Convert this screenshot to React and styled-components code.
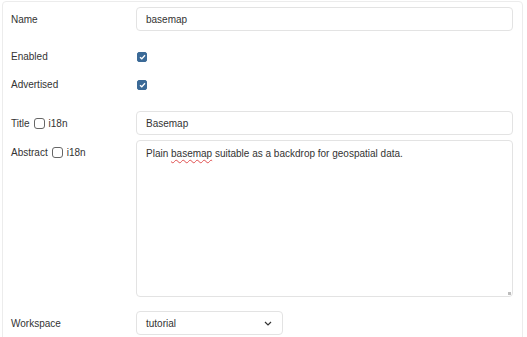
import React from "react";
import styled, { createGlobalStyle } from "styled-components";

const GlobalStyle = createGlobalStyle`
  html, body {
    margin: 0;
    padding: 0;
    background: #ffffff;
  }
  body {
    font-family: "Liberation Sans", Arial, sans-serif;
    font-size: 10px;
    color: #333333;
  }
`;

// PANEL

const Panel = styled.div`
  box-sizing: border-box;
  margin: 1px 4px 0 2px;
  min-height: 360px;
  border: 1px solid #ececec;
  border-radius: 4px;
  padding: 3px 9px 0 8px;
`;

const Row = styled.div`
  display: grid;
  grid-template-columns: 125px 1fr;
  align-items: ${props => (props.top ? "start" : "center")};
  margin-top: ${props => props.gap || 0}px;
  min-height: ${props => props.h || 20}px;
`;

const Label = styled.label`
  display: flex;
  align-items: center;
  gap: 4px;
  font-size: 10px;
  color: #333;
  padding-top: ${props => props.pt || 0}px;
`;

const Field = styled.div`
  box-sizing: border-box;
  height: 24px;
  display: flex;
  align-items: center;
  padding: 0 9px;
  border: 1px solid #e3e3e3;
  border-radius: 4px;
  background: #fff;
  font-size: 10px;
  color: #333;
`;

const TextArea = styled.div`
  position: relative;
  box-sizing: border-box;
  height: 157px;
  padding: 6px 9px;
  border: 1px solid #e3e3e3;
  border-radius: 4px;
  font-size: 10px;
  line-height: 13px;
  color: #333;

  &::after {
    content: "";
    position: absolute;
    right: 1px;
    bottom: 1px;
    width: 3px;
    height: 3px;
    background: #bdbdbd;
  }
`;

const Misspelled = styled.span`
  text-decoration: underline wavy #e05050;
  text-decoration-thickness: 1px;
  text-underline-offset: 2px;
`;

const Select = styled(Field)`
  width: 147px;
  justify-content: space-between;
  padding-right: 10px;
`;

const Check = styled.span`
  display: inline-flex;
  align-items: center;
  justify-content: center;
  box-sizing: border-box;
  width: ${props => props.size || 10}px;
  height: ${props => props.size || 10}px;
  border-radius: ${props => (props.checked ? 2 : 3)}px;
  margin-left: ${props => props.ml || 0}px;
  background: ${props => (props.checked ? "#3b6a97" : "#fff")};
  border: 1px solid ${props => (props.checked ? "#3b6a97" : "#666")};
`;

const CheckMark = () => (
  <svg width="7" height="6" viewBox="0 0 7 6">
    <path d="M1 3.2 L2.8 4.8 L6 1.3" fill="none" stroke="#fff" strokeWidth="1.3" />
  </svg>
);

const Chevron = () => (
  <svg width="8" height="5" viewBox="0 0 8 5">
    <path d="M1 1 L4 4 L7 1" fill="none" stroke="#333" strokeWidth="1.2" />
  </svg>
);

const App = () => {
  return (
    <>
      <GlobalStyle />
      <Panel>
        <Row gap={2} h={24}>
          <Label>Name</Label>
          <Field>basemap</Field>
        </Row>
        <Row gap={15}>
          <Label>Enabled</Label>
          <div>
            <Check checked ml={1}><CheckMark /></Check>
          </div>
        </Row>
        <Row gap={8}>
          <Label>Advertised</Label>
          <div>
            <Check checked ml={1}><CheckMark /></Check>
          </div>
        </Row>
        <Row gap={17} h={24}>
          <Label>
            Title <Check size={11} /> i18n
          </Label>
          <Field>Basemap</Field>
        </Row>
        <Row gap={5} top>
          <Label pt={7}>
            Abstract <Check size={11} /> i18n
          </Label>
          <TextArea>
            Plain <Misspelled>basemap</Misspelled> suitable as a backdrop for geospatial data.
          </TextArea>
        </Row>
        <Row gap={14} h={24}>
          <Label>Workspace</Label>
          <div>
            <Select>
              tutorial
              <Chevron />
            </Select>
          </div>
        </Row>
      </Panel>
    </>
  );
};

export default App;
